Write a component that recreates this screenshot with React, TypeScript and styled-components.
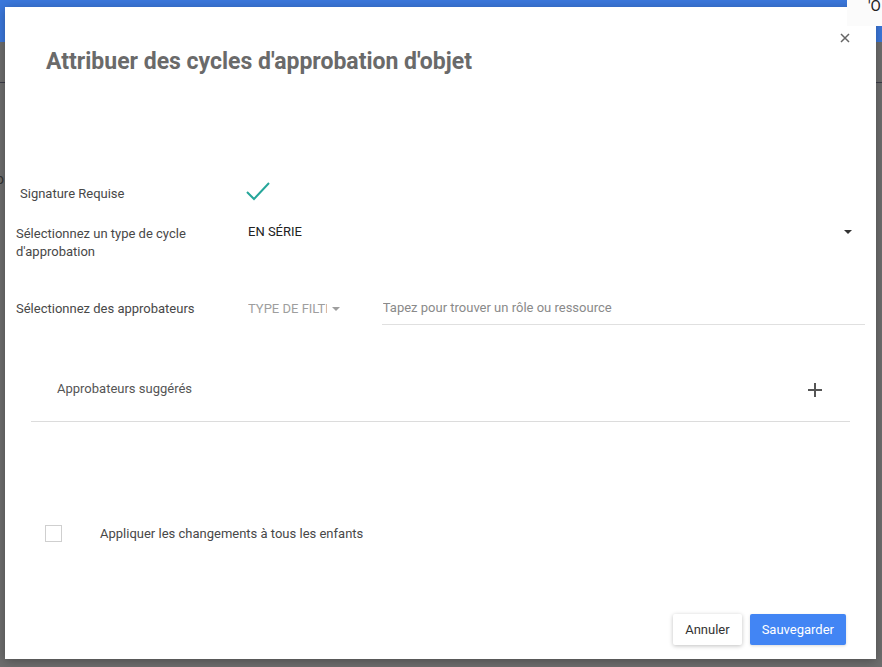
import styled, { createGlobalStyle } from 'styled-components';

const GlobalStyle = createGlobalStyle`
  html, body {
    margin: 0;
    padding: 0;
    font-family: Roboto, 'Liberation Sans', Arial, sans-serif;
  }
`;

const Page = styled.div`
  position: relative;
  width: 882px;
  height: 667px;
  overflow: hidden;
  background: #6e6e6e;
`;

const AppHeader = styled.div`
  height: 42px;
  background: #3b78dc;
`;

const AppRule = styled.div`
  margin-top: 40px;
  height: 1px;
  background: #3c3c48;
`;

const AppGlyph = styled.div`
  margin-top: 88px;
  margin-left: -4px;
  font-size: 14px;
  color: #333;
`;

const Tooltip = styled.div`
  position: absolute;
  top: 0;
  right: 0;
  width: 35px;
  height: 27px;
  background: #fbfbfb;
  color: #222;
  font-size: 15px;
  line-height: 15px;
  padding-left: 21px;
  margin-top: -1px;
  box-sizing: border-box;
  overflow: hidden;
  white-space: nowrap;
`;

const Modal = styled.div`
  position: absolute;
  left: 5px;
  top: 7px;
  width: 871px;
  height: 652px;
  background: #fff;
  box-shadow: 0 2px 10px rgba(0, 0, 0, 0.3);
  display: flex;
  flex-direction: column;
  box-sizing: border-box;
`;

const Header = styled.div`
  padding: 41px 0 0 41px;
`;

const Title = styled.h1`
  margin: 0;
  font-size: 23px;
  line-height: 28px;
  font-weight: 700;
  color: #6a6a6a;
`;

const CloseButton = styled.button`
  position: absolute;
  top: 24px;
  right: 24px;
  width: 14px;
  height: 14px;
  padding: 0;
  border: none;
  background: transparent;
  display: flex;
  align-items: center;
  justify-content: center;
  cursor: pointer;
`;

const Body = styled.div`
  display: flex;
  flex-direction: column;
  padding: 0 11px 0 11px;
`;

const Row = styled.div<{ $top: number; $indent?: number }>`
  display: flex;
  align-items: center;
  margin-top: ${(p) => p.$top}px;
  padding-left: ${(p) => p.$indent ?? 0}px;
`;

const Label = styled.div<{ $width: number }>`
  width: ${(p) => p.$width}px;
  flex-shrink: 0;
  font-size: 13px;
  line-height: 18px;
  color: #484848;
`;

const Value = styled.div`
  flex: 1;
  font-size: 13px;
  line-height: 18px;
  color: #222;
`;

const SelectRow = styled(Row)`
  align-items: flex-start;
`;

const SelectValue = styled.div`
  flex: 1;
  display: flex;
  justify-content: space-between;
  align-items: center;
  padding-right: 13px;
  font-size: 13px;
  line-height: 18px;
  color: #222;
  margin-top: -2px;
`;

const Caret = styled.span<{ $color: string }>`
  display: inline-block;
  width: 0;
  height: 0;
  border-left: 4px solid transparent;
  border-right: 4px solid transparent;
  border-top: 4px solid ${(p) => p.$color};
`;

const FilterType = styled.div`
  width: 134px;
  display: flex;
  align-items: center;
  gap: 5px;
  font-size: 13px;
  color: #9e9e9e;
`;

const FilterText = styled.span`
  width: 79px;
  overflow: hidden;
  white-space: nowrap;
`;

const SearchInput = styled.input`
  width: 483px;
  border: none;
  border-bottom: 1px solid #e0e0e0;
  padding: 8px 0 9px 1px;
  font-family: Roboto, 'Liberation Sans', Arial, sans-serif;
  font-size: 13px;
  color: #333;
  outline: none;
  &::placeholder {
    color: #8a8a8a;
  }
`;

const Suggested = styled.div`
  margin: 36px 26px 0 26px;
  height: 61px;
  display: flex;
  align-items: center;
  justify-content: space-between;
  padding: 0 26px 0 26px;
  border-bottom: 1px solid #dcdcdc;
  box-sizing: border-box;
`;

const SuggestedTitle = styled.div`
  font-size: 13px;
  color: #555;
  margin-top: -6px;
`;

const AddButton = styled.button`
  border: none;
  background: transparent;
  padding: 0;
  display: flex;
  cursor: pointer;
  margin: -2px 1px 0 0;
`;

const CheckRow = styled.div`
  display: flex;
  align-items: center;
  margin-top: 103px;
  padding-left: 40px;
`;

const Checkbox = styled.span`
  width: 15px;
  height: 15px;
  border: 1px solid #cfcfcf;
  margin-right: 38px;
`;

const CheckLabel = styled.span`
  font-size: 13px;
  color: #484848;
`;

const Footer = styled.div`
  margin-top: auto;
  display: flex;
  justify-content: flex-end;
  gap: 8px;
  padding: 0 30px 14px 0;
`;

const Button = styled.button<{ $primary?: boolean }>`
  height: 31px;
  padding: 0 12px;
  border: none;
  border-radius: 2px;
  font-family: Roboto, 'Liberation Sans', Arial, sans-serif;
  font-size: 13px;
  cursor: pointer;
  background: ${(p) => (p.$primary ? '#4285f4' : '#fff')};
  color: ${(p) => (p.$primary ? '#fff' : '#333')};
  box-shadow: ${(p) => (p.$primary ? '0 1px 3px rgba(0,0,0,0.15)' : '0 1px 4px rgba(0,0,0,0.25)')};
`;

const App = () => {
  return (
    <Page>
      <GlobalStyle />
      <AppHeader />
      <AppRule />
      <AppGlyph>o</AppGlyph>
      <Modal>
        <Header>
          <Title>Attribuer des cycles d'approbation d'objet</Title>
        </Header>
        <CloseButton aria-label="Fermer">
          <svg width="10" height="10" viewBox="0 0 10 10">
            <path d="M1 1L9 9M9 1L1 9" stroke="#666" strokeWidth="1.5" />
          </svg>
        </CloseButton>
        <Body>
          <Row $top={105} $indent={4}>
            <Label $width={226}>Signature Requise</Label>
            <Value>
              <svg width="24" height="20" viewBox="0 0 24 20">
                <path d="M1 11L8 18L23 2" fill="none" stroke="#26a69a" strokeWidth="2" />
              </svg>
            </Value>
          </Row>
          <SelectRow $top={19}>
            <Label $width={232}>
              Sélectionnez un type de cycle
              <br />
              d'approbation
            </Label>
            <SelectValue>
              EN SÉRIE
              <Caret $color="#333" />
            </SelectValue>
          </SelectRow>
          <Row $top={31}>
            <Label $width={232}>Sélectionnez des approbateurs</Label>
            <FilterType>
              <FilterText>TYPE DE FILTRE</FilterText>
              <Caret $color="#9e9e9e" />
            </FilterType>
            <SearchInput placeholder="Tapez pour trouver un rôle ou ressource" />
          </Row>
        </Body>
        <Suggested>
          <SuggestedTitle>Approbateurs suggérés</SuggestedTitle>
          <AddButton aria-label="Ajouter">
            <svg width="16" height="16" viewBox="0 0 16 16">
              <path d="M8 1V15M1 8H15" stroke="#555" strokeWidth="2" />
            </svg>
          </AddButton>
        </Suggested>
        <CheckRow>
          <Checkbox />
          <CheckLabel>Appliquer les changements à tous les enfants</CheckLabel>
        </CheckRow>
        <Footer>
          <Button>Annuler</Button>
          <Button $primary>Sauvegarder</Button>
        </Footer>
      </Modal>
      <Tooltip>'O</Tooltip>
    </Page>
  );
};

export default App;
